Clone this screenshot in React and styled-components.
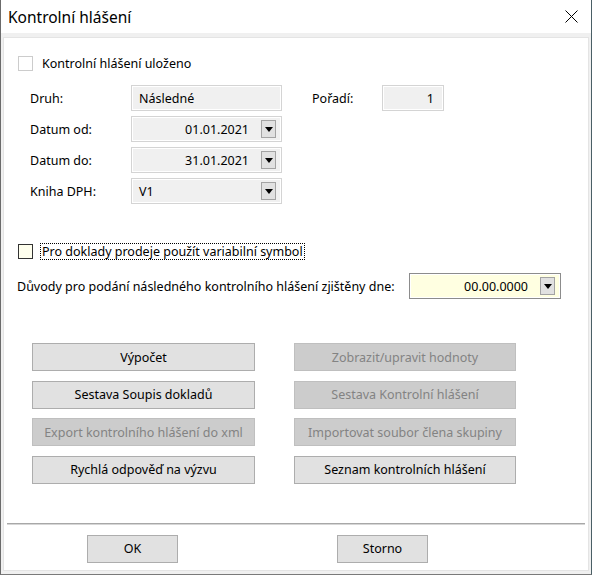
import React from 'react';
import styled, { createGlobalStyle } from 'styled-components';

const GlobalStyle = createGlobalStyle`
    html, body {
        margin: 0;
        padding: 0;
        background: #ffffff;
    }
    * {
        box-sizing: border-box;
    }
    `

const Window = styled.div`
    display: flex;
    flex-direction: column;
    width: 592px;
    height: 575px;
    background: #f0f0f0;
    border-left: 1px solid #6b6b6b;
    border-right: 1px solid #4a5f66;
    border-bottom: 1px solid #7a7a7a;
    font-family: "Noto Sans", "Open Sans", sans-serif;
    font-size: 12.5px;
    color: #000;
    `
const TitleBar = styled.div`
    display: flex;
    align-items: center;
    justify-content: space-between;
    height: 33px;
    padding: 0 13px 0 7px;
    background: #ffffff;
    font-size: 15.5px;
    `
const Frame = styled.div`
    flex: 1;
    display: flex;
    padding: 4px 2px 3px 2px;
    `
const Panel = styled.div`
    flex: 1;
    display: flex;
    flex-direction: column;
    background: #ffffff;
    border: 1px solid #e4e4e4;
    `
const CheckRow = styled.label`
    display: flex;
    align-items: center;
    gap: 8px;
    height: 16px;
    margin: ${p => p.$top}px 0 0 14px;
    `
const Box = styled.span`
    width: 15px;
    height: 15px;
    border: 1px solid ${p => p.$disabled ? '#cccccc' : '#333333'};
    background: ${p => p.$disabled ? '#ffffff' : '#ffffee'};
    `
const CheckText = styled.span`
    padding: 0 1px;
    line-height: 15px;
    outline: ${p => p.$focus ? '1px dotted #000' : 'none'};
    `
const FormGrid = styled.div`
    display: grid;
    grid-template-columns: 101px 151px 30px 70px 62px;
    grid-auto-rows: 26px;
    row-gap: 5px;
    align-items: center;
    margin: 14px 0 0 26px;
    `
const Label = styled.span`
    white-space: nowrap;
    `
const Field = styled.div`
    display: flex;
    align-items: center;
    justify-content: ${p => p.$right ? 'flex-end' : 'space-between'};
    height: 26px;
    width: ${p => p.$width ? p.$width + 'px' : '100%'};
    padding: 0 ${p => p.$drop ? 5 : 9}px 0 7px;
    background: ${p => p.$bg || '#f0f0f0'};
    border: 1px solid ${p => p.$border || '#d4d4d4'};
    box-shadow: inset 0 0 0 1px #ffffff;
    `
const Value = styled.span`
    flex: 1;
    text-align: ${p => p.$right ? 'right' : 'left'};
    padding-right: ${p => p.$drop ? 12 : 0}px;
    `
const DropButton = styled.span`
    display: flex;
    align-items: center;
    justify-content: center;
    width: 15px;
    height: 18px;
    background: #e1e1e1;
    border: 1px solid #a3a3a3;
    `
const ReasonRow = styled.div`
    display: flex;
    align-items: center;
    justify-content: space-between;
    margin: 14px 0 0 13px;
    width: 544px;
    `
const ButtonGrid = styled.div`
    display: grid;
    grid-template-columns: 223px 222px;
    column-gap: 39px;
    grid-auto-rows: 28px;
    row-gap: 9.5px;
    margin: 44px 0 0 28px;
    `
const Button = styled.div`
    display: flex;
    align-items: center;
    justify-content: center;
    width: ${p => p.$width ? p.$width + 'px' : 'auto'};
    height: 28px;
    background: ${p => p.$disabled ? '#cccccc' : '#e1e1e1'};
    border: 1px solid ${p => p.$disabled ? '#bfbfbf' : '#adadad'};
    color: ${p => p.$disabled ? '#838383' : '#000000'};
    white-space: nowrap;
    `
const Separator = styled.div`
    height: 2px;
    margin: 39px 3px 0 3px;
    border-top: 1px solid #a8a8a8;
    border-bottom: 1px solid #d6d6d6;
    `
const Footer = styled.div`
    display: flex;
    gap: 159px;
    margin: 10px 0 0 83px;
    `

const Arrow = () => (
    <svg width="8" height="5" viewBox="0 0 8 5">
        <path d="M0 0 H8 L4 5 Z" fill="#000" />
    </svg>
)

const CloseIcon = () => (
    <svg width="13" height="13" viewBox="0 0 13 13">
        <path d="M0.5 0.5 L12.5 12.5 M12.5 0.5 L0.5 12.5" stroke="#000" strokeWidth="1" />
    </svg>
)

function Combo({ value, right, bg, border, width }) {
    return (
        <Field $drop $bg={bg} $border={border} $width={width}>
            <Value $right={right} $drop>{value}</Value>
            <DropButton><Arrow /></DropButton>
        </Field>
    )
}

const leftButtons = [
    { text: 'Výpočet' },
    { text: 'Sestava Soupis dokladů' },
    { text: 'Export kontrolního hlášení do xml', disabled: true },
    { text: 'Rychlá odpověď na výzvu' },
]
const rightButtons = [
    { text: 'Zobrazit/upravit hodnoty', disabled: true },
    { text: 'Sestava Kontrolní hlášení', disabled: true },
    { text: 'Importovat soubor člena skupiny', disabled: true },
    { text: 'Seznam kontrolních hlášení' },
]

export default function App() {
    const buttons = leftButtons.flatMap((b, i) => [b, rightButtons[i]])
    return (
        <>
            <GlobalStyle />
            <Window>
                <TitleBar>
                    <span>Kontrolní hlášení</span>
                    <CloseIcon />
                </TitleBar>
                <Frame>
                    <Panel>
                        <CheckRow $top={17}>
                            <Box $disabled />
                            <CheckText>Kontrolní hlášení uloženo</CheckText>
                        </CheckRow>

                        <FormGrid>
                            <Label>Druh:</Label>
                            <Field>Následné</Field>
                            <span />
                            <Label>Pořadí:</Label>
                            <Field $right>1</Field>

                            <Label>Datum od:</Label>
                            <Combo value="01.01.2021" right />
                            <span /><span /><span />

                            <Label>Datum do:</Label>
                            <Combo value="31.01.2021" right />
                            <span /><span /><span />

                            <Label>Kniha DPH:</Label>
                            <Combo value="V1" />
                        </FormGrid>

                        <CheckRow $top={39}>
                            <Box />
                            <CheckText $focus>Pro doklady prodeje použít variabilní symbol</CheckText>
                        </CheckRow>

                        <ReasonRow>
                            <Label>Důvody pro podání následného kontrolního hlášení zjištěny dne:</Label>
                            <Combo value="00.00.0000" right bg="#ffffe1" border="#8c8c8c" width={152} />
                        </ReasonRow>

                        <ButtonGrid>
                            {buttons.map(b => (
                                <Button key={b.text} $disabled={b.disabled}>{b.text}</Button>
                            ))}
                        </ButtonGrid>

                        <Separator />

                        <Footer>
                            <Button $width={91}>OK</Button>
                            <Button $width={91}>Storno</Button>
                        </Footer>
                    </Panel>
                </Frame>
            </Window>
        </>
    )
}
